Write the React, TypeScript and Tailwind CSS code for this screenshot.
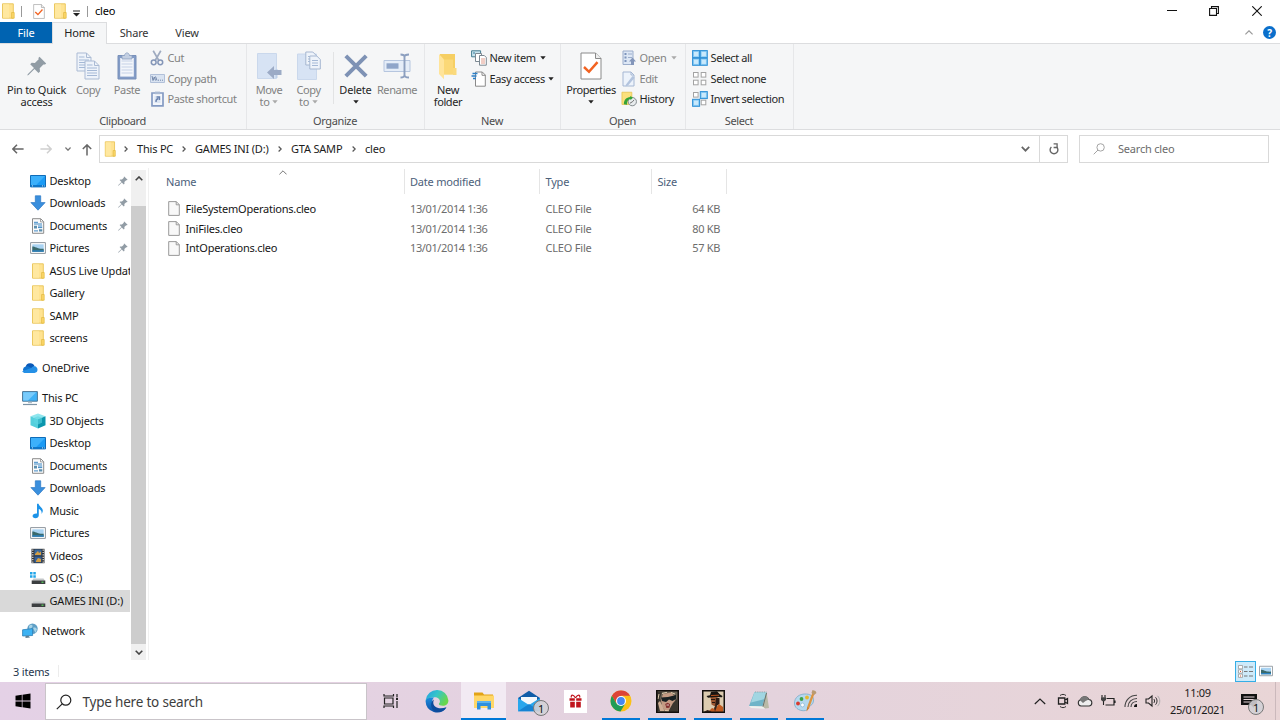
import type { ReactNode } from 'react';

type IconProps = { className?: string };

/* ---------- icons: navigation pane ---------- */

function FolderIcon({ className = 'w-3.5 h-4' }: IconProps) {
  return (
    <svg viewBox="0 0 14 16" className={className} preserveAspectRatio="none">
      <path d="M1.5.8h10.8v14.4H1.5z" fill="#ffe391" stroke="#e9c353" strokeWidth=".9" />
      <path d="M2 1.3h6v13.4H2z" fill="#ffe8a0" />
      <path d="M10.6 9.5h2.6v5.7h-2.6z" fill="#fbd668" stroke="#e2b93f" strokeWidth=".7" />
    </svg>
  );
}

function DesktopIcon() {
  return (
    <svg viewBox="0 0 16 16" className="h-4 w-4">
      <path d="M.5 2.5h15v11.4H.5z" fill="#1b9bf5" stroke="#0f6cb8" />
      <path d="M1 3h14L6 12.3H1z" fill="#3cb0fb" />
      <path d="M1 12.2h14v1.4H1z" fill="#0b6fc0" />
      <path d="M2 12.9h1m9 0h1m1 0h.7" stroke="#fff" strokeWidth=".8" />
    </svg>
  );
}

function DownloadsIcon() {
  return (
    <svg viewBox="0 0 16 16" className="h-4 w-4">
      <path d="M5.3.8h5.4v6.8h4.4L8 15.2.9 7.6h4.4z" fill="#3a8fdd" stroke="#2c78c4" strokeWidth=".7" />
    </svg>
  );
}

function DocumentsIcon() {
  return (
    <svg viewBox="0 0 16 16" className="h-4 w-4">
      <path d="M2.5.7h8.2l3 3v11.6H2.5z" fill="#fbfbfb" stroke="#8c8c8c" />
      <path d="M10.5.9v3h3" fill="none" stroke="#8c8c8c" strokeWidth=".8" />
      <path d="M4 4.3h4M4 6h8M8 8h4.2M8 9.6h4.2M4 12.9h4" stroke="#3d88c4" />
      <path d="M4 7.7h3v2.7H4zM9 11.3h3.3v2.3H9z" fill="#5c8fae" />
    </svg>
  );
}

function PicturesIcon({ className = 'h-4 w-4' }: IconProps) {
  return (
    <svg viewBox="0 0 16 16" className={className}>
      <path d="M.6 2.6h14.8v10.8H.6z" fill="#fff" stroke="#8f979e" />
      <path d="M2.3 4.3h11.4v7.4H2.3z" fill="#a9d3f2" />
      <path d="M2.3 6.5c3 0 5 2.5 11.4 2.2v3H2.3z" fill="#3a6a6c" />
      <path d="M2.3 10.3h11.4v1.4H2.3z" fill="#2d83c4" />
    </svg>
  );
}

function OneDriveIcon() {
  return (
    <svg viewBox="0 0 16 16" className="h-4 w-4">
      <path d="M3.6 7a4.7 4.7 0 0 1 9-.8L9 9z" fill="#0a59b8" />
      <path d="M3.4 13A3.4 3.4 0 0 1 3.8 6.4c1.8-.4 3.700.3 5.300 1.600L13 12z" fill="#1273cf" />
      <path d="M12.500 13H3.600c-1.600 0-2.800-.8-3.400-1.800L9.300 8c1-1.600 3-2.300 4.400-1.400C16.500 8.300 16 13 12.500 13z" fill="#2590e6" />
    </svg>
  );
}

function ThisPcIcon() {
  return (
    <svg viewBox="0 0 16 16" className="h-4 w-4">
      <path d="M.6 1.6h14.8v9.600H.6z" fill="#3fb1f6" stroke="#4b7695" />
      <path d="M1.2 2.2h13L6 10.600H1.200z" fill="#79cbfb" />
      <path d="M6 11.700h4v1.500H6z" fill="#b2bec8" />
      <path d="M1 14.500h14" stroke="#7c93a5" strokeWidth="1.2" />
    </svg>
  );
}

function ObjectsIcon() {
  return (
    <svg viewBox="0 0 16 16" className="h-4 w-4">
      <path d="M.5 3.300L8 .5l7.500 2.800-7.500 3z" fill="#8fe6ee" />
      <path d="M.5 3.300l7.500 3v9.200L.5 12.300z" fill="#54cfdc" />
      <path d="M15.500 3.300l-7.500 3v9.200l7.500-3.200z" fill="#0b96ad" />
      <path d="M4 4.800l4-1.500 4 1.500v5l-4 1.800-4-1.800z" fill="#5bd5e2" opacity=".6" />
    </svg>
  );
}

function MusicIcon() {
  return (
    <svg viewBox="0 0 16 16" className="h-4 w-4">
      <path d="M7 .8h1.600c.2 2.700 4.500 3.800 4.200 7.300-.1 1.200-.6 2.200-1.300 2.800.6-2.400-.6-4.200-2.700-5v6.400c0 1.900-1.600 3-3.400 3-1.700 0-2.800-.9-2.800-2.200 0-1.600 1.700-2.900 4.400-2.600z" fill="#1c93e8" />
    </svg>
  );
}

function VideosIcon() {
  return (
    <svg viewBox="0 0 16 16" className="h-4 w-4">
      <path d="M1.500.8h13v14.400h-13z" fill="#303336" />
      <path d="M2.800 1.500v13.500M13.200 1.500v13.500" stroke="#e6e6e6" strokeWidth="1.2" strokeDasharray="1.2 1.2" />
      <path d="M4.400 1.500h7.200v6H4.400z" fill="#39699e" />
      <path d="M4.400 8.500h7.200v6H4.400z" fill="#315f9b" />
      <path d="M5 6l3-3 1 2 2-1.500V7H5zM6 13l2-3 3 1v3H6z" fill="#d59f43" />
    </svg>
  );
}

function DriveIcon({ system = false }: { system?: boolean }) {
  return (
    <svg viewBox="0 0 16 16" className="h-4 w-4">
      {system && <path d="M0 2h2.500v2.500H0zM3.300 2h2.500v2.500H3.300zM0 5.300h2.500v2.500H0zM3.300 5.300h2.500v2.500H3.300z" fill="#22a5e8" />}
      <path d="M3.500 8.500h10L15 10.800H2z" fill="#c4c7c9" />
      <path d="M1.700 10.500h13.600v3.500H1.700z" fill="#3c3f41" />
      <path d="M11.500 12.200h2" stroke="#5ad65c" strokeWidth="1.2" />
    </svg>
  );
}

function NetworkIcon() {
  return (
    <svg viewBox="0 0 16 16" className="h-4 w-4">
      <circle cx="10.500" cy="5.700" r="5.200" fill="#5f9fc6" />
      <path d="M7 3c2-2.500 4-1 3.500.5S8 6 7.500 8M11 5c2-1 3 0 4 1l-1.500 4z" fill="#a8d3e6" />
      <path d="M.6 6.800l10-1.200v6.900L.6 13z" fill="#3cb2f3" stroke="#2a7fb8" strokeWidth=".8" />
      <path d="M3.500 13l3-.2L8 14.500l-4.500.4z" fill="#5f7f95" />
    </svg>
  );
}

function PinIcon({ className = 'h-3 w-3' }: IconProps) {
  return (
    <svg viewBox="0 0 20 20" className={className}>
      <path d="M12.500.8l6.700 6.700L18 8.600l-1.600-.2-3.700 3.800.3 3.200-1.500 1.500-4-4L1.500 19l-1.200.5.4-1.300L7 12 3.200 8.200l1.500-1.400 3.200.2 3.800-3.700-.3-1.400z" fill="#919ca5" />
    </svg>
  );
}

/* ---------- icons: ribbon ---------- */

function CopyIcon() {
  return (
    <svg viewBox="0 0 26 30" className="h-[30px] w-[26px]">
      {[[1, 1], [9, 9]].map(([x, y]) => (
        <g key={x} transform={`translate(${x} ${y})`}>
          <path d="M1 1h9.500L15 5.500V19H1z" fill="#eef3fa" stroke="#abbbd4" />
          <path d="M10.500 1v4.500H15" fill="none" stroke="#abbbd4" />
          <path d="M3 5h5.500M3 8h10M3 10.500h10M3 13h10M3 15.500h10" stroke="#a5b9d6" />
        </g>
      ))}
    </svg>
  );
}

function PasteIcon() {
  return (
    <svg viewBox="0 0 20 28" className="h-7 w-5">
      <path d="M1 3.500h18V27H1z" fill="#839cc7" stroke="#7890b9" />
      <path d="M3.200 6h13.600v18.600H3.200z" fill="#f3f6fb" />
      <path d="M4.500 9h11M4.500 12h11M4.500 15h11M4.500 18h11M4.500 21h11" stroke="#c5d1e6" />
      <path d="M5 7V3.500h2.500C8 0 12 0 12.500 3.500H15V7z" fill="#c3cfe2" stroke="#8b9fc0" strokeWidth=".8" />
    </svg>
  );
}

function CutIcon() {
  return (
    <svg viewBox="0 0 14 16" className="h-4 w-3.5">
      <path d="M3.200.8l5.500 9.500M10.800.8l-5.500 9.500" stroke="#9fabc0" strokeWidth="1.7" />
      <circle cx="3.700" cy="12.300" r="2.400" fill="none" stroke="#8496b8" strokeWidth="1.5" />
      <circle cx="10.300" cy="12.300" r="2.400" fill="none" stroke="#8496b8" strokeWidth="1.5" />
    </svg>
  );
}

function CopyPathIcon() {
  return (
    <svg viewBox="0 0 15 9" className="h-[9px] w-[15px]">
      <path d="M.5.5h14v8H.5z" fill="#d9e3f1" stroke="#b1c0d9" />
      <path d="M2 2l1 4.500L4.300 3l1.200 3.500M5.500 2.500l1.500 4M8 6.200h1m1 0h1m1 0h1" fill="none" stroke="#7287ab" />
    </svg>
  );
}

function PasteShortcutIcon() {
  return (
    <svg viewBox="0 0 13 16" className="h-4 w-[13px]">
      <path d="M1 2h11v12.800H1z" fill="#f3f6fb" stroke="#849bc3" strokeWidth="1.7" />
      <path d="M4 .6h5v2.600H4z" fill="#a9b9d2" />
      <path d="M3.500 5h6v7h-6z" fill="#dbe5f3" />
      <path d="M5 11c-.3-2 .5-3 2.500-3.500M5.500 6h3v3" fill="none" stroke="#6a82ae" strokeWidth="1.3" />
    </svg>
  );
}

function MoveToIcon() {
  return (
    <svg viewBox="0 0 26 28" className="h-7 w-[26px]">
      <path d="M1.500 1.500h19v25h-19z" fill="#d7e3f4" stroke="#cad8ec" />
      <path d="M19.500 17v9h2v-9z" fill="#bfd0e8" />
      <path d="M11 20.500l7-6.500v4h7.500v5H18v4z" fill="#9cabc6" />
    </svg>
  );
}

function CopyToIcon() {
  return (
    <svg viewBox="0 0 26 30" className="h-[30px] w-[26px]">
      <path d="M1.500 3h19v25.500h-19z" fill="#d7e3f4" stroke="#cad8ec" />
      {[[9, 0], [13, 4]].map(([x, y]) => (
        <g key={x} transform={`translate(${x} ${y})`}>
          <path d="M.8 1h7l3.500 3.500V14H.8z" fill="#eef3fa" stroke="#a6b7d1" />
          <path d="M3 5.500h6M3 8h6M3 10.500h6" stroke="#a5b9d6" />
        </g>
      ))}
    </svg>
  );
}

function DeleteIcon() {
  return (
    <svg viewBox="0 0 24 24" className="h-6 w-6">
      <path d="M1.800 1.800l20.400 20.400M22.200 1.800L1.800 22.200" stroke="#7e92b5" strokeWidth="4" />
    </svg>
  );
}

function RenameIcon() {
  return (
    <svg viewBox="0 0 28 26" className="h-[26px] w-7">
      <path d="M1 7.500h26v11H1z" fill="#e5edf8" stroke="#b6c6df" />
      <path d="M3.500 10.300h12v5.400h-12z" fill="#8fa5c9" />
      <path d="M17.500 1.500c2.500 0 4 .7 4 2.500v18c0 1.800-1.500 2.500-4 2.500M26 1.500c-2.500 0-4.500.7-4.500 2.500v18c0 1.800 2 2.500 4.500 2.500" fill="none" stroke="#8c9fbf" strokeWidth="1.9" />
    </svg>
  );
}

function NewFolderIcon() {
  return (
    <svg viewBox="0 0 20 28" className="h-7 w-5">
      <path d="M2 2h15v18.500L2 22.500z" fill="#f6cf63" />
      <path d="M15 16h3.500v7H15z" fill="#fada7d" />
      <path d="M1 2l5 5.500v19.800L1 22z" fill="#ffe49a" />
      <path d="M6 7.500h9v15.200H6z" fill="#fbd877" />
    </svg>
  );
}

function NewItemIcon() {
  return (
    <svg viewBox="0 0 16 16" className="h-4 w-4">
      <path d="M.6.8h9v6h-9z" fill="#c9e4ee" stroke="#447d91" />
      <path d="M4.500 3.500h6v8h-6z" fill="#fff" stroke="#7c8992" />
      <path d="M8.500 5.500h4.800l2 2v7.700H8.500z" fill="#fff" stroke="#7c8992" />
      <path d="M10 9h4M10 11h4M10 13h4" stroke="#d9836f" strokeWidth=".8" />
      <path d="M2 3h2" stroke="#347e9d" />
    </svg>
  );
}

function EasyAccessIcon() {
  return (
    <svg viewBox="0 0 16 16" className="h-4 w-4">
      <path d="M4.500 1h6.800l3 3v11.200H4.500z" fill="#fff" stroke="#8a8a8a" />
      <path d="M11 1v3.300h3.300" fill="none" stroke="#8a8a8a" />
      <path d="M1.500 2.500h5M.5 5h5M2 7.500h3" stroke="#2b7fc7" strokeWidth="1.3" />
    </svg>
  );
}

function PropertiesIcon({ className = 'h-7 w-[22px]' }: IconProps) {
  return (
    <svg viewBox="0 0 22 28" className={className}>
      <path d="M1 1h14.500L21 6.500V27H1z" fill="#fff" stroke="#8a8a8a" />
      <path d="M15.500 1v5.500H21" fill="#eee" stroke="#8a8a8a" />
      <path d="M4 15l5 4.800 8.500-9.600" fill="none" stroke="#f26322" strokeWidth="2.500" />
    </svg>
  );
}

function OpenIcon() {
  return (
    <svg viewBox="0 0 16 16" className="h-4 w-4">
      <path d="M2 1h10v13.500H2z" fill="#dde7f5" stroke="#9badcb" />
      <path d="M3.500 3h2v2h-2zM3.500 6.500h2v2h-2zM3.500 10h2v2h-2z" fill="#7d94bc" />
      <path d="M7 4h4M7 7.500h4" stroke="#9badcb" />
      <path d="M11.500 7.500l3.500 4h-2V15h-3v-3.500H8z" fill="#8396ba" />
    </svg>
  );
}

function EditIcon() {
  return (
    <svg viewBox="0 0 16 16" className="h-4 w-4">
      <path d="M2 1h8l3 3v11H2z" fill="#edf3fb" stroke="#a5b7d3" />
      <path d="M10 1v3h3" fill="none" stroke="#a5b7d3" />
      <path d="M5 13.500L11.500 5l2.200 1.700L7 14.500l-2.500 1z" fill="#b3c4de" />
    </svg>
  );
}

function HistoryIcon() {
  return (
    <svg viewBox="0 0 17 16" className="h-4 w-[17px]">
      <path d="M1 .8h10.500v13H1z" fill="#fbe07d" stroke="#e4c14b" strokeWidth=".8" />
      <circle cx="12" cy="10.800" r="4.400" fill="#e8ecee" stroke="#7c8488" />
      <path d="M9.500 12.500L12 11l2-2" fill="none" stroke="#555" strokeWidth=".9" />
      <path d="M3 13.500c.2-4.500 2.500-7 7-7.500l-.3-1.500 3 2.200-2.700 2.500V8C7.500 8.500 6 10.500 6.500 14z" fill="#35a338" />
    </svg>
  );
}

function SelectIcon({ filled }: { filled: boolean[] }) {
  return (
    <svg viewBox="0 0 16 16" className="h-4 w-4">
      {filled.map((on, i) => {
        const x = i % 2 ? 8.7 : 1;
        const y = i > 1 ? 8.7 : 1;
        return on ? (
          <g key={i}>
            <rect x={x - 0.4} y={y - 0.4} width="7" height="7" fill="#8ccdf5" stroke="#2d8fd6" />
            <rect x={x + 1} y={y + 1} width="4.2" height="4.2" fill="#c9e9fc" />
          </g>
        ) : (
          <rect key={i} x={x + 0.5} y={y + 0.5} width="4.6" height="4.6" fill="#fff" stroke="#a3a3a3" />
        );
      })}
    </svg>
  );
}

function Caret({ muted = false }: { muted?: boolean }) {
  return (
    <svg viewBox="0 0 6 4" className="inline-block h-[4px] w-[6px]">
      <path d="M.3.3h5.400L3 3.500z" fill={muted ? '#aaaaaa' : '#222222'} />
    </svg>
  );
}

/* ---------- ribbon building blocks ---------- */

function RibbonGroup({ title, className, children }: { title: string; className: string; children: ReactNode }) {
  return (
    <div className={`flex h-[85px] shrink-0 flex-col ${className}`}>
      <div className="flex h-[69px] items-start">{children}</div>
      <div className="pr-px text-center leading-4 text-[#4c4c4c]">{title}</div>
    </div>
  );
}

type BigButtonProps = { icon: ReactNode; className: string; muted?: boolean; label: string; second?: ReactNode };

function BigButton({ icon, className, muted, label, second }: BigButtonProps) {
  return (
    <div className={`flex shrink-0 flex-col items-center whitespace-nowrap pt-[7px] ${muted ? 'text-[#828282]' : 'text-[#262626]'} ${className}`}>
      <div className="flex h-[30px] items-center">{icon}</div>
      <div className="mt-[3px] leading-[12px]">{label}</div>
      <div className="flex h-3 items-center gap-[3px] leading-[12px]">{second}</div>
    </div>
  );
}

function SmallButton({ icon, muted, children }: { icon: ReactNode; muted?: boolean; children: ReactNode }) {
  return (
    <div className={`flex h-[20.5px] items-center whitespace-nowrap ${muted ? 'text-[#828282]' : 'text-[#262626]'}`}>
      <span className="mr-[2.5px] flex w-4 justify-center">{icon}</span>
      {children}
    </div>
  );
}

function TitleBar() {
  return (
    <div className="flex h-[22px] items-center">
      <FolderIcon className="ml-px h-4 w-3.5" />
      <div className="ml-[6px] h-[11px] w-px bg-[#999]" />
      <PropertiesIcon className="ml-[11px] h-[15px] w-3" />
      <FolderIcon className="ml-[8px] h-4 w-3.5" />
      <svg viewBox="0 0 7 7" className="ml-[6px] mt-1 h-[7px] w-[7px]">
        <path d="M0 .5h7v1H0zM0 3h7L3.500 6.500z" fill="#222" />
      </svg>
      <div className="ml-[7px] h-[11px] w-px bg-[#999]" />
      <span className="ml-[7px] text-black">cleo</span>
      <div className="ml-auto flex items-center">
        <svg viewBox="0 0 10 10" className="h-2.5 w-2.5">
          <path d="M0 4.500h10" stroke="#111" />
        </svg>
        <svg viewBox="0 0 10 10" className="ml-8 h-2.5 w-2.5">
          <path d="M.6 2.500h6.900v6.900H.6zM2.500 2.500V.6h6.900v6.900H7.500" fill="none" stroke="#111" strokeWidth="1.1" />
        </svg>
        <svg viewBox="0 0 10 10" className="ml-[33px] mr-[18px] h-2.5 w-2.5">
          <path d="M.3.3l9.400 9.400M9.700.3L.3 9.700" stroke="#111" strokeWidth="1.1" />
        </svg>
      </div>
    </div>
  );
}

function Tabs() {
  return (
    <div className="flex h-[22px] border-b border-[#dcdddf] text-[#333]">
      <div className="flex w-[52px] items-center justify-center bg-[#0063b1] text-white">File</div>
      <div className="-mb-px flex w-[55px] items-center justify-center border-x border-t border-[#dcdddf] bg-[#f5f6f7] pb-[2px] text-[#222]">Home</div>
      <div className="flex w-[54px] items-center justify-center">Share</div>
      <div className="flex w-[52px] items-center justify-center">View</div>
      <div className="ml-auto flex items-center">
        <svg viewBox="0 0 8 5" className="h-[5px] w-2">
          <path d="M.4 4.400L4 .8l3.600 3.600" fill="none" stroke="#999" strokeWidth="1.2" />
        </svg>
        <div className="ml-[10px] mr-1 flex h-[13px] w-[13px] items-center justify-center rounded-full bg-[#0b6fcb] text-[10px] font-bold leading-none text-white">?</div>
      </div>
    </div>
  );
}

function Ribbon() {
  return (
    <div className="flex h-[86px] border-b border-[#dcdddf] bg-[#f5f6f7] tracking-[-0.38px]">
      <RibbonGroup title="Clipboard" className="w-[247px] border-r border-[#e6e7e9]">
        <BigButton icon={<PinIcon className="h-5 w-5" />} className="w-[73px] tracking-[-0.25px]" label="Pin to Quick" second="access" />
        <BigButton icon={<CopyIcon />} className="w-[30px]" muted label="Copy" />
        <BigButton icon={<PasteIcon />} className="ml-[3px] w-[42px]" muted label="Paste" />
        <div className="ml-px pt-1">
          <SmallButton icon={<CutIcon />} muted>Cut</SmallButton>
          <SmallButton icon={<CopyPathIcon />} muted>Copy path</SmallButton>
          <SmallButton icon={<PasteShortcutIcon />} muted>Paste shortcut</SmallButton>
        </div>
      </RibbonGroup>
      <RibbonGroup title="Organize" className="w-[178px] border-r border-[#e6e7e9]">
        <BigButton icon={<MoveToIcon />} className="ml-[2px] w-10" muted label="Move" second={<>to <Caret muted /></>} />
        <BigButton icon={<CopyToIcon />} className="w-[39px]" muted label="Copy" second={<>to <Caret muted /></>} />
        <div className="ml-[5px] mt-2 h-[52px] w-px bg-[#e2e3e4]" />
        <BigButton icon={<DeleteIcon />} className="w-[43px] tracking-[-0.2px]" label="Delete" second={<Caret />} />
        <BigButton icon={<RenameIcon />} className="w-10" muted label="Rename" />
      </RibbonGroup>
      <RibbonGroup title="New" className="w-[136px] border-r border-[#e6e7e9]">
        <BigButton icon={<NewFolderIcon />} className="ml-px w-[44px]" label="New" second="folder" />
        <div className="ml-px pt-1">
          <SmallButton icon={<NewItemIcon />}>
            New item <span className="ml-1 flex"><Caret /></span>
          </SmallButton>
          <SmallButton icon={<EasyAccessIcon />}>
            Easy access <span className="ml-[3px] flex"><Caret /></span>
          </SmallButton>
        </div>
      </RibbonGroup>
      <RibbonGroup title="Open" className="w-[125px] border-r border-[#e6e7e9]">
        <BigButton icon={<PropertiesIcon />} className="ml-px w-[58px]" label="Properties" second={<Caret />} />
        <div className="ml-px pt-1">
          <SmallButton icon={<OpenIcon />} muted>
            Open <span className="ml-[5px] flex"><Caret muted /></span>
          </SmallButton>
          <SmallButton icon={<EditIcon />} muted>Edit</SmallButton>
          <SmallButton icon={<HistoryIcon />}>History</SmallButton>
        </div>
      </RibbonGroup>
      <RibbonGroup title="Select" className="w-[108px] border-r border-[#e6e7e9]">
        <div className="ml-[6px] pt-1">
          <SmallButton icon={<SelectIcon filled={[true, true, true, true]} />}>Select all</SmallButton>
          <SmallButton icon={<SelectIcon filled={[false, false, false, false]} />}>Select none</SmallButton>
          <SmallButton icon={<SelectIcon filled={[false, true, true, false]} />}>Invert selection</SmallButton>
        </div>
      </RibbonGroup>
    </div>
  );
}

function Crumb({ label, className }: { label: string; className: string }) {
  return (
    <div className={`flex shrink-0 items-center whitespace-nowrap ${className}`}>
      <svg viewBox="0 0 4 6" className="mr-[9px] h-[6px] w-1">
        <path d="M.6.5L3.200 3 .6 5.500" fill="none" stroke="#555" strokeWidth="1.2" />
      </svg>
      {label}
    </div>
  );
}

function AddressBar() {
  return (
    <div className="flex h-[38px] items-center text-[#1c1c1c]">
      <svg viewBox="0 0 12 10" className="ml-3 h-2.5 w-3">
        <path d="M5 .8L.9 5 5 9.200M1 5h10.600" fill="none" stroke="#666" strokeWidth="1.5" />
      </svg>
      <svg viewBox="0 0 12 10" className="ml-4 h-2.5 w-3">
        <path d="M7 .8L11.100 5 7 9.200M11 5H.4" fill="none" stroke="#d0d0d0" strokeWidth="1.5" />
      </svg>
      <svg viewBox="0 0 6 4" className="ml-[13px] h-1 w-1.5">
        <path d="M.4.5L3 3.200 5.600.5" fill="none" stroke="#777" strokeWidth="1.3" />
      </svg>
      <svg viewBox="0 0 10 12" className="ml-[11px] mt-0.5 h-3 w-2.5">
        <path d="M.8 5L5 .9 9.200 5M5 1v10.600" fill="none" stroke="#666" strokeWidth="1.5" />
      </svg>
      <div className="ml-[7px] flex h-7 w-[969px] items-center border border-[#d9d9d9]">
        <FolderIcon className="ml-1 h-4 w-3" />
        <Crumb label="This PC" className="ml-2 w-[58px]" />
        <Crumb label="GAMES INI (D:)" className="w-[96px]" />
        <Crumb label="GTA SAMP" className="w-[74px]" />
        <Crumb label="cleo" className="" />
        <svg viewBox="0 0 9 6" className="ml-auto mr-[9px] h-1.5 w-[9px]">
          <path d="M.8.8l3.700 3.900L8.200.8" fill="none" stroke="#666" strokeWidth="1.7" />
        </svg>
        <div className="flex h-full w-7 items-center justify-center border-l border-[#d9d9d9]">
          <svg viewBox="0 0 10 12" className="h-3 w-2.5">
            <path d="M2.300 4A4 4 0 1 0 7.900 4.200M1.300 1.600v3h3M5.500 1.200" fill="none" stroke="#666" strokeWidth="1.400" className="hidden" />
            <path d="M7.600 3.900A3.900 3.900 0 1 1 2.400 3.900" fill="none" stroke="#666" strokeWidth="1.400" />
            <path d="M4.600.9h3.500v3.600H4.600" fill="none" stroke="#666" strokeWidth="1.300" />
          </svg>
        </div>
      </div>
      <div className="ml-[11px] flex h-7 w-[190px] items-center border border-[#d9d9d9] text-[#6b6b6b]">
        <svg viewBox="0 0 12 12" className="ml-[13px] mr-[13px] h-3 w-3">
          <circle cx="7.600" cy="4.400" r="3.700" fill="none" stroke="#9a9a9a" strokeWidth=".9" />
          <path d="M5 7L.7 11.300" stroke="#9a9a9a" strokeWidth=".9" />
        </svg>
        Search cleo
      </div>
    </div>
  );
}

type NavEntry = { label: string; icon: ReactNode; top?: boolean; pinned?: boolean; active?: boolean; gap?: boolean };

const navEntries: NavEntry[] = [
  { label: 'Desktop', icon: <DesktopIcon />, pinned: true },
  { label: 'Downloads', icon: <DownloadsIcon />, pinned: true },
  { label: 'Documents', icon: <DocumentsIcon />, pinned: true },
  { label: 'Pictures', icon: <PicturesIcon />, pinned: true },
  { label: 'ASUS Live Updat', icon: <FolderIcon /> },
  { label: 'Gallery', icon: <FolderIcon /> },
  { label: 'SAMP', icon: <FolderIcon /> },
  { label: 'screens', icon: <FolderIcon /> },
  { label: 'OneDrive', icon: <OneDriveIcon />, top: true, gap: true },
  { label: 'This PC', icon: <ThisPcIcon />, top: true, gap: true },
  { label: '3D Objects', icon: <ObjectsIcon /> },
  { label: 'Desktop', icon: <DesktopIcon /> },
  { label: 'Documents', icon: <DocumentsIcon /> },
  { label: 'Downloads', icon: <DownloadsIcon /> },
  { label: 'Music', icon: <MusicIcon /> },
  { label: 'Pictures', icon: <PicturesIcon /> },
  { label: 'Videos', icon: <VideosIcon /> },
  { label: 'OS (C:)', icon: <DriveIcon system /> },
  { label: 'GAMES INI (D:)', icon: <DriveIcon />, active: true },
  { label: 'Network', icon: <NetworkIcon />, top: true, gap: true },
];

function Sidebar() {
  return (
    <div className="flex w-[149px] shrink-0 border-r border-[#f0f0f0]">
      <div className="w-[130px] overflow-hidden pt-[1.5px] text-[#161616]">
        {navEntries.map((entry, i) => (
          <div
            key={i}
            className={`flex h-[22.5px] items-center whitespace-nowrap ${entry.top ? 'pl-[22px]' : 'pl-[29.5px]'} ${entry.gap ? 'mt-[7.5px]' : ''} ${entry.active ? 'bg-[#d9d9d9]' : ''}`}
          >
            <span className="mr-1 flex w-4 shrink-0 justify-center">{entry.icon}</span>
            {entry.label}
            {entry.pinned && (
              <span className="ml-auto mr-[2px]">
                <PinIcon className="h-[10px] w-[10px]" />
              </span>
            )}
          </div>
        ))}
      </div>
      <div className="ml-px mt-[2px] flex h-[490px] w-[15px] flex-col bg-[#f0f0f0]">
        <div className="flex h-9 justify-center pt-[6px]">
          <svg viewBox="0 0 8 5" className="h-[5px] w-2">
            <path d="M.7 4.300L4 1l3.300 3.300" fill="none" stroke="#444" strokeWidth="1.6" />
          </svg>
        </div>
        <div className="flex-1 bg-[#cdcdcd]" />
        <div className="flex h-4 items-center justify-center">
          <svg viewBox="0 0 8 5" className="h-[5px] w-2">
            <path d="M.7.7L4 4 7.300.7" fill="none" stroke="#444" strokeWidth="1.6" />
          </svg>
        </div>
      </div>
    </div>
  );
}

const files = [
  { name: 'FileSystemOperations.cleo', size: '64 KB' },
  { name: 'IniFiles.cleo', size: '80 KB' },
  { name: 'IntOperations.cleo', size: '57 KB' },
];

function FileList() {
  return (
    <div className="flex-1">
      <div className="mt-px flex h-[25px] text-[#4c607a]">
        <div className="relative flex w-[256px] items-center border-r border-[#e5e5e5] pl-[17px]">
          Name
          <svg viewBox="0 0 8 5" className="absolute left-[129.5px] top-px h-[5px] w-2">
            <path d="M.4 4.400L4 .8l3.600 3.600" fill="none" stroke="#777" />
          </svg>
        </div>
        <div className="flex w-[135px] items-center border-r border-[#e5e5e5] pl-[5px]">Date modified</div>
        <div className="flex w-[112px] items-center border-r border-[#e5e5e5] pl-[5.5px]">Type</div>
        <div className="flex w-[75px] items-center border-r border-[#e5e5e5] pl-[5.5px]">Size</div>
      </div>
      <div className="mt-[5px] text-[#6d6d6d]">
        {files.map((file) => (
          <div key={file.name} className="flex h-[19.7px] items-center">
            <div className="flex w-[261px] items-center pl-[19px] tracking-[-0.24px] text-[#161616]">
              <svg viewBox="0 0 12 15" className="mr-[5.5px] h-[15px] w-3">
                <path d="M.7.6h7.600l3 3v10.800H.7z" fill="#f8f8f8" stroke="#8f8f8f" strokeWidth=".9" />
                <path d="M8.200.6v3.200h3" fill="none" stroke="#8f8f8f" strokeWidth=".9" />
              </svg>
              {file.name}
            </div>
            <div className="w-[135.5px] tracking-[-0.38px]">13/01/2014 1:36</div>
            <div className="w-[111.5px]">CLEO File</div>
            <div className="w-[63px] text-right tracking-[-0.35px]">{file.size}</div>
          </div>
        ))}
      </div>
    </div>
  );
}

function StatusBar() {
  return (
    <div className="flex h-[22px] items-center text-[#26374d]">
      <span className="ml-[13px] pt-px">3 items</span>
      <div className="ml-[9px] h-3 w-px bg-[#ececec]" />
      <div className="ml-auto flex h-[21px] w-[21px] items-center justify-center border border-[#35aee6] bg-[#cdeafa]">
        <svg viewBox="0 0 15 13" className="h-[13px] w-[15px]">
          <path d="M.5.5h4v3.300h-4zM.5 4.800h4v3.300h-4zM.5 9.100h4v3.300h-4z" fill="#fff" stroke="#9a9a9a" strokeWidth=".8" />
          <path d="M6 2h3.500M11 2h4M6 6.500h3.500M11 6.500h4M6 11h3.500M11 11h4" stroke="#777" />
          <path d="M2 6.500h1M2 11h1" stroke="#d65b3b" />
        </svg>
      </div>
      <PicturesIcon className="ml-[3px] mr-[7px] h-3.5 w-3.5" />
    </div>
  );
}

/* ---------- taskbar ---------- */

function TaskViewIcon() {
  return (
    <svg viewBox="0 0 16 16" className="h-4 w-4">
      <path d="M1 1v2h9.500V1M1 15v-2h9.500v2M1.500 5H10v6H1.500z" fill="none" stroke="#222" strokeWidth="1.2" />
      <path d="M14 1v3M14 8v7" stroke="#222" strokeWidth="1.2" />
      <path d="M13 4.800h2V7h-2z" fill="#222" />
    </svg>
  );
}

function EdgeIcon() {
  return (
    <svg viewBox="0 0 24 24" className="h-6 w-6">
      <defs>
        <linearGradient id="edgeTop" x1="0" y1="0" x2="1" y2=".5">
          <stop offset="0" stopColor="#249ce4" />
          <stop offset=".5" stopColor="#35c5c9" />
          <stop offset="1" stopColor="#68d74b" />
        </linearGradient>
        <linearGradient id="edgeBottom" x1="0" y1="0" x2="0" y2="1">
          <stop offset="0" stopColor="#1b8cde" />
          <stop offset="1" stopColor="#0c4fa5" />
        </linearGradient>
      </defs>
      <path d="M.7 11a11.400 11.400 0 0 1 22.700.5c0 3.500-2.500 5.300-5.500 5.300-2.600 0-4.400-.9-4-2 .2-.5 1-1 1-2.500 0-1.800-1.800-4-5.400-4C6 8.300 2.500 9.300.7 12z" fill="url(#edgeTop)" />
      <path d="M.6 12.500C1 9.500 4.500 8.200 9 8.500 6 11 6.500 17 11 19.300c3.500 1.700 7 1.200 10.300-.8A11.400 11.400 0 0 1 .6 12.500z" fill="url(#edgeBottom)" />
      <path d="M9 10.500c-2.500 5 1.500 11 12.500 7.800-3 5.500-9.500 6-13 3C5 18.300 5.500 12.500 9 10.500z" fill="#0d4c9c" />
    </svg>
  );
}

function ExplorerIcon() {
  return (
    <svg viewBox="0 0 22 20" className="h-5 w-[22px]">
      <path d="M1 1.500h8.500l1.500 2h9v5H1z" fill="#e2a317" />
      <path d="M1 4.500h20V17H1z" fill="#ffd768" />
      <path d="M4 10h14v8.500h-3.500V15h-7v3.500H4z" fill="#2f8fdd" />
      <path d="M4 10h14v2H4z" fill="#5cb3f0" />
    </svg>
  );
}

function MailIcon() {
  return (
    <svg viewBox="0 0 24 22" className="h-[22px] w-6">
      <path d="M1 8L12 .8 23 8v13H1z" fill="#0f5ca8" />
      <path d="M4 7h16v8H4z" fill="#f4f8fc" />
      <path d="M1 8l11 7 11-7v13.200H1z" fill="#29a6ec" />
      <path d="M1 21.200L12 14l11 7.200z" fill="#1583d3" />
    </svg>
  );
}

function GiftIcon() {
  return (
    <div className="flex h-[23px] w-[23px] items-center justify-center bg-white">
      <svg viewBox="0 0 13 14" className="h-3.5 w-[13px]">
        <path d="M.5 4.300h5.300v2.500H.5zM7.200 4.300h5.300v2.500H7.200zM1.200 7.700h4.600v5.800H1.200zM7.200 7.700h4.600v5.800H7.200z" fill="#c0141c" />
        <path d="M6.500 3.800C4 .2 1.800.5 2.300 3.500M6.500 3.800C9 .2 11.200.5 10.700 3.500" fill="none" stroke="#c0141c" strokeWidth="1.2" />
      </svg>
    </div>
  );
}

function ChromeIcon() {
  return (
    <svg viewBox="0 0 22 22" className="h-[22px] w-[22px]">
      <circle cx="11" cy="11" r="10.500" fill="#fbc116" />
      <path d="M1.900 5.800a10.500 10.500 0 0 1 18.200 0H11l-4.500 7.700z" fill="#dc4437" />
      <path d="M1.900 5.800a10.500 10.500 0 0 0 8.600 15.700l4.800-8H6.400z" fill="#1e9c56" />
      <circle cx="11" cy="11" r="5" fill="#fff" />
      <circle cx="11" cy="11" r="3.900" fill="#4688f1" />
    </svg>
  );
}

function SampFaceIcon() {
  return (
    <svg viewBox="0 0 23 23" className="h-[23px] w-[23px]">
      <path d="M0 0h23v23H0z" fill="#6b6254" />
      <path d="M5 10l2-6 8-1.500 4 4-.5 9L14 21H9L6 16z" fill="#c39a83" />
      <path d="M1 2h5L4 8l1.500 6L4 21H1zM17 13l4-4v13h-9z" fill="#3a352e" />
      <path d="M2 13l2-2 2.500 5 2 5H4z" fill="#cfae95" />
      <path d="M5 7.500l7-.5 8-2v4l-3.500 2-3.500-1.500-3 2.500-4-1z" fill="#182022" />
      <path d="M6 3.500l5-1.200M15 2.500l4 1.500M3 4L2 9M9 20.500l4 .5" stroke="#e0cdae" />
      <path d="M9.200 14l2.500-1.300 2.500 1.500-.8 3.600-3 .2z" fill="#84302f" />
      <path d="M10.500 15h2.500" stroke="#e8d9cf" strokeWidth=".9" />
      <path d="M.7.7h21.600v21.600H.7z" fill="none" stroke="#120e0c" strokeWidth="1.6" />
    </svg>
  );
}

function SampHatIcon() {
  return (
    <svg viewBox="0 0 23 23" className="h-[23px] w-[23px]">
      <path d="M0 0h23v23H0z" fill="#dccbb0" />
      <path d="M8.500 7h7l.5 5-3 4.500-3.500-2z" fill="#9a5630" />
      <path d="M14 8h3.500v6L13 17z" fill="#2b1a13" />
      <path d="M4.500 6L8 5.300l1-3.500 6-.6 3 3.300 2.500 1.500-.5 1.300-7-.3L6 7.800z" fill="#191512" />
      <path d="M9 5.500l8-.3" stroke="#b74f1c" />
      <path d="M6 22l4-4 3 1 4-5 4 3v5z" fill="#c05a20" />
      <path d="M1.500 22l4-2 3 1 1 1zM12 18l2-3 1 1.500-2 5z" fill="#3a2318" />
      <path d="M9 9.500h4M10 12.500h3" stroke="#2a160f" />
      <path d="M.7.7h21.600v21.600H.7z" fill="none" stroke="#120e0c" strokeWidth="1.6" />
    </svg>
  );
}

function NotepadIcon() {
  return (
    <svg viewBox="0 0 22 22" className="h-[22px] w-[22px]">
      <path d="M6.500 2h12l-4 14.500L1 16z" fill="#6fb4c8" />
      <path d="M6.500 2h12l-2 7L3 12.500z" fill="#a1d6e2" />
      <path d="M18.500 2L21 18l-4 .5-2.500-2z" fill="#b9b9a6" />
      <path d="M1 16l13.500.5L17 18.800 3 18z" fill="#eef2ee" />
      <path d="M18.500 3l-3.500 13.500" stroke="#68736f" />
      <path d="M7 2h11.500" stroke="#8fa2aa" strokeWidth="1.2" strokeDasharray="1 .8" />
    </svg>
  );
}

function PaintIcon() {
  return (
    <svg viewBox="0 0 24 24" className="h-6 w-6">
      <path d="M1.500 15C1 8 7 4.500 13.500 5c5 .4 7.500 3 7 7-.4 3.500-2.500 4-4 5.500-1.500 1.600-1.500 3.500-4 4C8 22.500 2 20 1.500 15z" fill="#b4d8ee" stroke="#7ba9c8" strokeWidth=".8" />
      <circle cx="8.500" cy="10" r="1.900" fill="#3ea34a" />
      <circle cx="14" cy="8.500" r="1.900" fill="#e8b82f" />
      <circle cx="5" cy="14.500" r="1.900" fill="#d93a2f" />
      <circle cx="9.500" cy="16" r="1.900" fill="#fff" stroke="#7ba9c8" strokeWidth=".6" />
      <path d="M20.500 4l-5.500 15" stroke="#dd9440" strokeWidth="2.2" />
      <path d="M14.200 18l-.7 4.500 2.800-3.500z" fill="#d07f2c" />
      <path d="M18.500 4l1-3 3 1 1 2-2.500 2z" fill="#b99a72" />
    </svg>
  );
}

function CountBadge({ className }: { className: string }) {
  return (
    <span className={`absolute flex h-4 w-4 items-center justify-center rounded-full border border-[#777] bg-[#d3d0d6]/90 text-[11px] leading-none text-[#111] ${className}`}>
      1
    </span>
  );
}

function TaskButton({ open, active, children }: { open?: boolean; active?: boolean; children: ReactNode }) {
  return (
    <div className={`relative flex h-full w-[46px] shrink-0 items-center justify-center ${active ? 'border-l border-transparent bg-[#f2eaf3] bg-clip-padding' : ''}`}>
      {children}
      {open && <div className={`absolute bottom-0 h-[2px] bg-[#0078d7] ${active ? 'w-[45px]' : 'w-[38px]'}`} />}
    </div>
  );
}

function Tray() {
  return (
    <div className="ml-auto flex h-full items-center">
      <svg viewBox="0 0 12 7" className="h-[7px] w-3">
        <path d="M.8 6L6 1l5.200 5" fill="none" stroke="#222" strokeWidth="1.2" />
      </svg>
      <svg viewBox="0 0 14 16" className="ml-[10px] h-4 w-3.5">
        <path d="M4 2.500c2-1.500 4-1.500 6 0M4 13.500c2 1.500 4 1.500 6 0" fill="none" stroke="#333" />
        <path d="M2.500 5h6.300v6H2.500zM8.800 7l2.700-1.500v5L8.800 9" fill="none" stroke="#222" strokeWidth="1.3" />
      </svg>
      <svg viewBox="0 0 16 12" className="ml-[7px] h-3 w-4">
        <path d="M4 11a3.200 3.200 0 0 1-.5-6.200 4.500 4.500 0 0 1 8.300-.3 3.300 3.300 0 0 1 .5 6.500z" fill="#eee" stroke="#333" strokeWidth="1.1" />
        <path d="M3 5.300a4.500 4.500 0 0 1 8.800-.8L8.500 6 6 8z" fill="#777" />
      </svg>
      <svg viewBox="0 0 16 12" className="ml-[7px] h-3 w-4">
        <path d="M6.500 3.500H14V10H5.500M15 5.500v2.500" fill="none" stroke="#222" strokeWidth="1.2" />
        <path d="M2 0v2.500M5 0v2.500M3.500 5v5" stroke="#222" strokeWidth="1.1" />
        <path d="M1 2.300h5V5L4.500 6.300h-2L1 5z" fill="#444" />
      </svg>
      <svg viewBox="0 0 14 14" className="ml-2 h-3.5 w-3.5">
        <path d="M1 13C1 6 6 1.300 13 1.300M4 13c0-5 3.800-8.500 9-8.500M7 13c0-3.300 2.500-5.500 6-5.500" fill="none" stroke="#444" strokeWidth="1.1" />
        <path d="M10 13c0-2 1-3 3-3v3z" fill="#111" />
      </svg>
      <svg viewBox="0 0 16 14" className="ml-[7px] h-3.5 w-4">
        <path d="M1 5h2.500L7 2v10L3.500 9H1z" fill="none" stroke="#222" strokeWidth="1.1" />
        <path d="M8.800 5c1 1 1 3 0 4M10.500 3.300c2 2 2 5.400 0 7.400" fill="none" stroke="#333" />
        <path d="M12.500 1.800c3 3 3 7.400 0 10.400" fill="none" stroke="#aaa" />
      </svg>
      <div className="ml-2 w-[57px] whitespace-nowrap text-center leading-[17px] tracking-[-0.35px] text-[#1a1a1a]">
        11:09
        <br />
        25/01/2021
      </div>
      <div className="relative ml-[15px] mr-[18px]">
        <svg viewBox="0 0 16 16" className="h-4 w-4">
          <path d="M0 1h16v11h-3v3l-3-3H0z" fill="#111" />
          <path d="M2.500 4h11M2.500 6.500h11M2.500 9h7" stroke="#e6d4d8" />
        </svg>
        <CountBadge className="left-[7px] top-[6px]" />
      </div>
      <div className="mr-1 h-full w-px bg-[#cbb9bc]" />
    </div>
  );
}

function Taskbar() {
  return (
    <div className="flex h-[38px] items-center bg-linear-to-r from-[#e4d1e6] via-[#e4d3dd] via-60% to-[#e9d5d6]">
      <div className="flex w-[45px] justify-center">
        <svg viewBox="0 0 16 16" className="h-4 w-4">
          <path d="M.5 2.700l6.300-.9v5.800H.5zM7.500 1.700l8-1.100v7h-8zM.5 8.400h6.300v5.800l-6.300-.9zM7.500 8.400h8v7l-8-1.100z" fill="#000" />
        </svg>
      </div>
      <div className="mt-px flex h-[37px] w-[322px] items-center border border-[#c9c4c9] bg-white text-[13.5px] text-[#3d3d3d]">
        <svg viewBox="0 0 16 16" className="ml-[10px] h-4 w-4">
          <circle cx="9.800" cy="6.200" r="5" fill="none" stroke="#222" strokeWidth="1.2" />
          <path d="M6.200 9.800L.8 15.200" stroke="#222" strokeWidth="1.2" />
        </svg>
        <span className="ml-[10.5px]">Type here to search</span>
      </div>
      <div className="ml-px flex h-full">
        <TaskButton><TaskViewIcon /></TaskButton>
        <TaskButton><EdgeIcon /></TaskButton>
        <TaskButton open active><ExplorerIcon /></TaskButton>
        <TaskButton>
          <MailIcon />
          <CountBadge className="left-[27px] top-[18px]" />
        </TaskButton>
        <TaskButton><GiftIcon /></TaskButton>
        <TaskButton open><ChromeIcon /></TaskButton>
        <TaskButton open><SampFaceIcon /></TaskButton>
        <TaskButton open><SampHatIcon /></TaskButton>
        <TaskButton open><NotepadIcon /></TaskButton>
        <TaskButton open><PaintIcon /></TaskButton>
      </div>
      <Tray />
    </div>
  );
}

export default function App() {
  return (
    <div className="flex h-[720px] w-[1280px] flex-col overflow-hidden bg-white font-['Noto_Sans','Open_Sans',sans-serif] text-[11px] leading-4 tracking-[-0.2px]">
      <TitleBar />
      <Tabs />
      <Ribbon />
      <AddressBar />
      <div className="flex h-[492px]">
        <Sidebar />
        <FileList />
      </div>
      <StatusBar />
      <Taskbar />
    </div>
  );
}
